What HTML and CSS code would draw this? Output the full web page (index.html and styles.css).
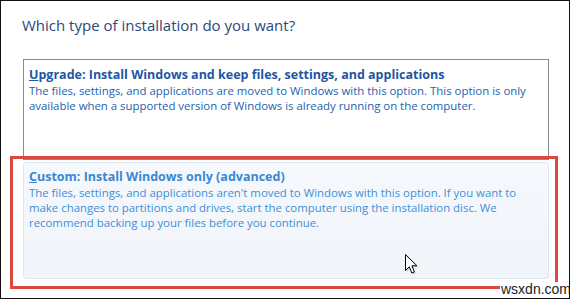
FILE: index.html
```html
<!DOCTYPE html>
<html>
<head>
    <meta charset="UTF-8">
    <title>Install Windows</title>
    <link rel="stylesheet" href="styles.css">
</head>
<body>
    <div class="frame">
        <h1 class="heading">Which type of installation do you want?</h1>
        <div class="options">
            <div class="option upgrade">
                <div class="option-title"><u>U</u>pgrade: Install Windows and keep files, settings, and applications</div>
                <div class="option-text">The files, settings, and applications are moved to Windows with this option. This option is only<br>available when a supported version of Windows is already running on the computer.</div>
            </div>
            <div class="option custom">
                <div class="option-title"><u>C</u>ustom: Install Windows only (advanced)</div>
                <div class="option-text">The files, settings, and applications aren't moved to Windows with this option. If you want to<br>make changes to partitions and drives, start the computer using the installation disc. We<br>recommend backing up your files before you continue.</div>
            </div>
        </div>
        <div class="highlight"></div>
        <svg class="cursor" width="15" height="23" viewBox="0 0 15 23">
            <path d="M2 2 L2 18 L5.8 14.3 L8.3 20.5 L10.9 19.4 L8.4 13.3 L13.5 13.3 Z" fill="#000" opacity="0.15"/>
            <path d="M0.5 0.5 L0.5 16.5 L4.3 12.8 L6.8 19 L9.4 17.9 L6.9 11.8 L12 11.8 Z" fill="#fff" stroke="#000" stroke-width="1" stroke-linejoin="miter"/>
        </svg>
        <div class="watermark">wsxdn.com</div>
    </div>
</body>
</html>
```

FILE: styles.css
```css
body {
    margin: 0;
    background-color: #fff;
    font-family: "Open Sans", "Noto Sans", sans-serif;
}

.frame {
    position: relative;
    width: 570px;
    height: 299px;
    box-sizing: border-box;
    border: 1px solid #111;
    background-color: #fff;
    overflow: hidden;
}

.heading {
    margin: 0;
    padding: 14px 0 0 21px;
    font-size: 15px;
    font-weight: normal;
    line-height: 20px;
    color: #2a4a7c;
}

.options {
    margin: 24px 0 0 22px;
    width: 526px;
}

.option {
    box-sizing: border-box;
    padding: 7px 5px 5px;
}

.upgrade {
    height: 101px;
    border: 1px solid #8a8a8a;
}

.custom {
    margin-top: 2px;
    padding-top: 6px;
    height: 117px;
    border: 1px solid #dfe5ec;
    border-radius: 3px;
    background: linear-gradient(#f5f8fc, #f1f4f9);
}

.option-title {
    font-size: 12.5px;
    font-weight: bold;
    line-height: 16px;
}

.option-text {
    font-size: 11.4px;
    line-height: 15px;
}

.upgrade .option-title { color: #1d56a3; }
.upgrade .option-text { color: #2462b0; }
.custom .option-title { color: #3b87d3; }
.custom .option-text { color: #3e8fd8; }

.highlight {
    position: absolute;
    left: 9px;
    top: 155px;
    width: 548px;
    height: 133px;
    box-sizing: border-box;
    border: 3px solid #d9493f;
}

.cursor {
    position: absolute;
    left: 404px;
    top: 253px;
}

.watermark {
    position: absolute;
    left: 499px;
    top: 281px;
    padding: 0 1px;
    background-color: #fff;
    font-family: "Liberation Sans", Arial, sans-serif;
    font-size: 14px;
    line-height: 15px;
    color: #222;
}
```
